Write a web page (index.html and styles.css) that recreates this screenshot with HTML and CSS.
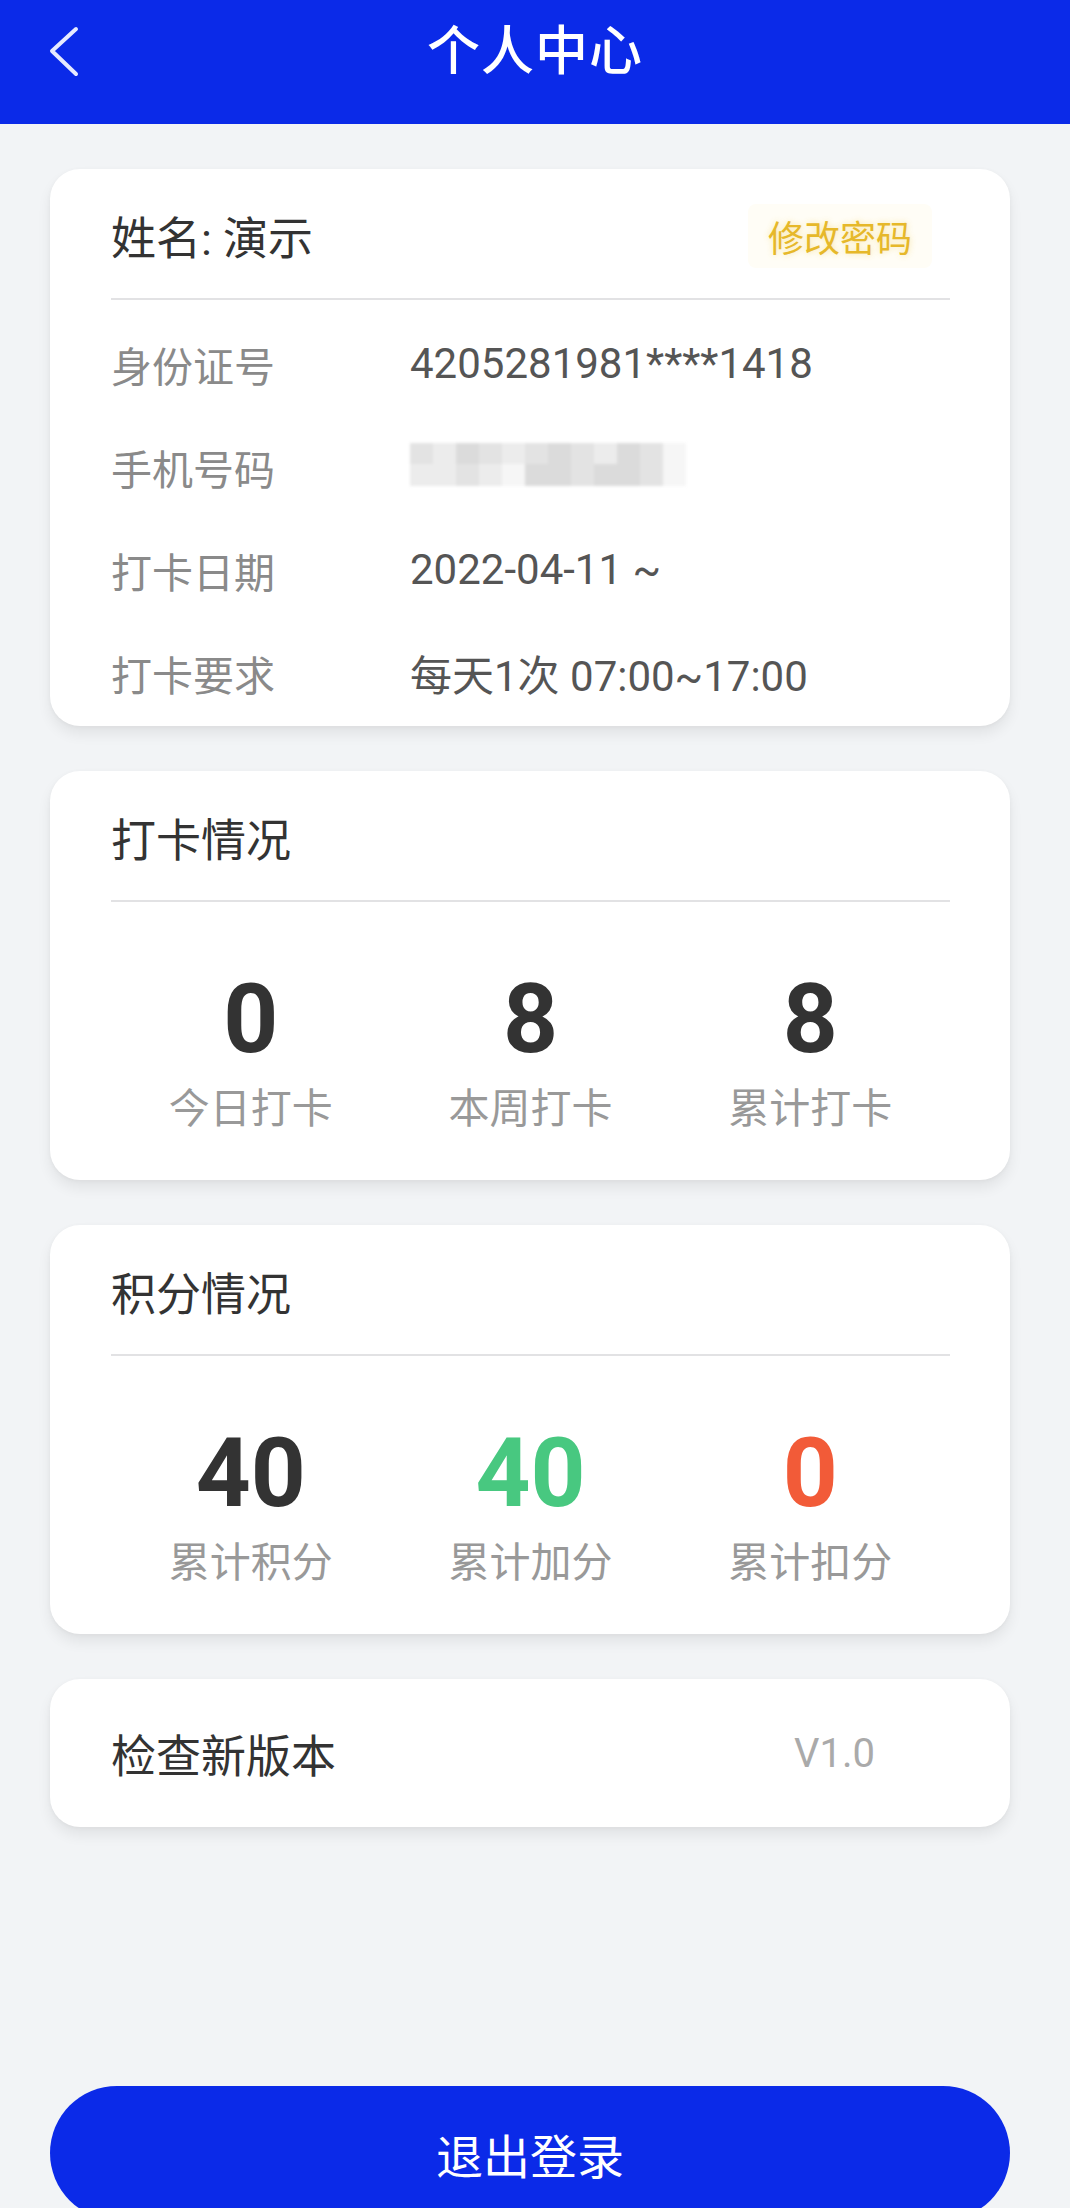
FILE: index.html
```html
<!DOCTYPE html>
<html lang="zh-CN">
<head>
<meta charset="utf-8">
<title>个人中心</title>
<link rel="stylesheet" href="styles.css">
</head>
<body>
<div class="page">
  <header class="topbar">
    <div class="back">
      <svg width="40" height="60" viewBox="0 0 40 60" aria-hidden="true">
        <polyline points="27,6 3,28 27,51" fill="none" stroke="#e6eaff" stroke-width="4" stroke-linecap="round" stroke-linejoin="round"/>
      </svg>
    </div>
    <h1 class="title">个人中心</h1>
    <div></div>
  </header>

  <main class="content">
    <section class="card">
      <div class="card-head">
        <span class="card-title">姓名: 演示</span>
        <span class="pwd">修改密码</span>
      </div>
      <div class="info">
        <div class="row"><span class="label">身份证号</span><span class="value">4205281981****1418</span></div>
        <div class="row"><span class="label">手机号码</span>
          <span class="blur">
            <i class="p2"></i><i class="p1"></i><i class="p3"></i><i class="p2"></i><i class="p1"></i><i class="p2"></i><i class="p3"></i><i class="p2"></i><i class="p1"></i><i class="p3"></i><i class="p2"></i><i class="p0"></i>
            <i class="p1"></i><i class="p1"></i><i class="p2"></i><i class="p1"></i><i class="p0"></i><i class="p3"></i><i class="p3"></i><i class="p2"></i><i class="p3"></i><i class="p3"></i><i class="p2"></i><i class="p0"></i>
          </span>
        </div>
        <div class="row"><span class="label">打卡日期</span><span class="value">2022-04-11 ~</span></div>
        <div class="row"><span class="label">打卡要求</span><span class="value">每天1次 07:00~17:00</span></div>
      </div>
    </section>

    <section class="card">
      <div class="card-head"><span class="card-title">打卡情况</span></div>
      <div class="stats">
        <div class="stat"><span class="num">0</span><span class="cap">今日打卡</span></div>
        <div class="stat"><span class="num">8</span><span class="cap">本周打卡</span></div>
        <div class="stat"><span class="num">8</span><span class="cap">累计打卡</span></div>
      </div>
    </section>

    <section class="card">
      <div class="card-head"><span class="card-title">积分情况</span></div>
      <div class="stats">
        <div class="stat"><span class="num">40</span><span class="cap">累计积分</span></div>
        <div class="stat"><span class="num green">40</span><span class="cap">累计加分</span></div>
        <div class="stat"><span class="num red">0</span><span class="cap">累计扣分</span></div>
      </div>
    </section>

    <section class="card version">
      <span class="card-title">检查新版本</span>
      <span class="ver">V1.0</span>
    </section>

    <button class="logout">退出登录</button>
  </main>
</div>
</body>
</html>
```

FILE: styles.css
```css
* { box-sizing: border-box; }

html, body {
  margin: 0;
  padding: 0;
}

body {
  background: #f2f4f6;
  font-family: Roboto, "Noto Sans CJK SC", sans-serif;
  color: #333;
  overflow: hidden;
}

.page {
  width: 1070px;
  height: 2208px;
  overflow: hidden;
}

.topbar {
  height: 124px;
  background: #0b2ae8;
  display: grid;
  grid-template-columns: 1fr auto 1fr;
  align-items: center;
  padding: 0 0 20px 0;
}

.back {
  padding-left: 49px;
  display: flex;
  align-items: center;
  padding-top: 2px;
}

.title {
  margin: 0;
  font-size: 53px;
  font-weight: 500;
  color: #ffffff;
  letter-spacing: 1px;
  line-height: 104px;
}

.content {
  padding: 45px 60px 0 50px;
  display: flex;
  flex-direction: column;
  gap: 45px;
  width: 1070px;
}

.card {
  width: 960px;
  background: #ffffff;
  border-radius: 30px;
  padding: 0 60px 0 61px;
  box-shadow: 0 8px 14px rgba(0, 0, 0, 0.07), 0 1px 4px rgba(0, 0, 0, 0.04);
}

.card-head {
  height: 131px;
  display: flex;
  align-items: center;
  justify-content: space-between;
  border-bottom: 2px solid #e2e2e4;
  padding-top: 4px;
}

.card-title {
  font-size: 45px;
  color: #333;
  font-weight: 400;
}

.pwd {
  font-size: 36px;
  color: #e6b82a;
  background: #fffdf6;
  padding: 6px 20px;
  margin-right: 18px;
  border-radius: 8px;
  text-shadow: 0 0 6px rgba(240, 200, 60, 0.45);
}

.info {
  padding: 12px 0 2px;
}

.row {
  height: 103px;
  display: flex;
  align-items: center;
}

.label {
  width: 299px;
  font-size: 41px;
  color: #8a8a8a;
}

.value {
  font-size: 42px;
  color: #555;
}

.blur {
  display: grid;
  grid-template-columns: repeat(12, 23px);
  grid-template-rows: 21px 22px;
  filter: blur(1.5px);
  margin-top: -4px;
}

.blur i { display: block; }
.p0 { background: #f6f6f6; }
.p1 { background: #ececec; }
.p2 { background: #e3e3e3; }
.p3 { background: #dbdbdb; }

.stats {
  display: flex;
  padding: 67px 0 43px;
}

.stat {
  flex: 1;
  display: flex;
  flex-direction: column;
  align-items: center;
  gap: 12px;
}

.num {
  font-size: 96px;
  font-weight: 700;
  line-height: 100px;
  color: #333;
}

.num.green { color: #48c880; }
.num.red { color: #f25b38; }

.cap {
  font-size: 41px;
  line-height: 56px;
  color: #999;
}

.version {
  height: 148px;
  display: flex;
  align-items: center;
  justify-content: space-between;
}

.ver {
  font-size: 40px;
  color: #aaa;
  margin-right: 75px;
}

.logout {
  margin-top: 214px;
  width: 960px;
  height: 134px;
  border: none;
  border-radius: 67px;
  background: #0b2ae8;
  color: #ffffff;
  font-family: Roboto, "Noto Sans CJK SC", sans-serif;
  font-size: 47px;
  font-weight: 400;
  padding: 0;
}
```
